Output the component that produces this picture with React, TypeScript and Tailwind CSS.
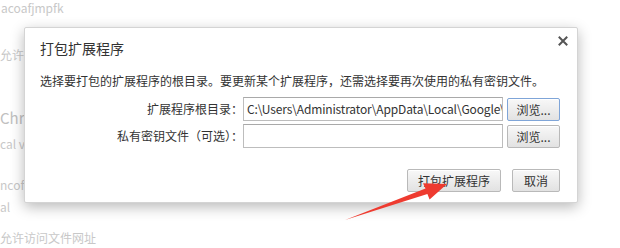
import React from "react";

const font = { fontFamily: '"Noto Sans CJK SC", "Noto Sans", sans-serif' };

function Btn({ children, w, focused }: { children: React.ReactNode; w: string; focused?: boolean }) {
  return (
    <button
      className={
        "h-[23px] rounded-[2px] border text-[12px] leading-[21px] text-[#333] bg-gradient-to-b from-[#f8f8f8] to-[#e2e2e2] shadow-[inset_0_1px_0_#fff] " +
        w +
        (focused ? " border-[#7fa5d8]" : " border-[#b9b9b9]")
      }
    >
      {children}
    </button>
  );
}

export default function App() {
  return (
    <div className="relative w-[620px] h-[248px] overflow-hidden bg-white" style={font}>
      {/* background page */}
      <div className="flex flex-col text-[#c8c8c8] text-[12px] leading-[16px]">
        <div className="mt-[0px] pl-[1px]">acoafjmpfk</div>
        <div className="mt-[31px]">允许</div>
        <div className="mt-[45px] text-[15px] leading-[20px] text-[#c0c0c0]">Chro</div>
        <div className="mt-[8px]">cal v</div>
        <div className="mt-[25px]">ncoff</div>
        <div className="mt-[6px]">al</div>
        <div className="mt-[15px]">允许访问文件网址</div>
      </div>

      {/* dialog */}
      <div className="absolute left-[24px] top-[27px] w-[554px] h-[176px] bg-white border border-[#d4d4d4] rounded-[2px] shadow-[0_4px_14px_rgba(0,0,0,0.28)] flex flex-col">
        <div className="flex items-start justify-between pl-[15px] pr-[9px] pt-[10px]">
          <div className="text-[14px] leading-[20px] text-[#333]">打包扩展程序</div>
          <svg width="10" height="10" viewBox="0 0 10 10" className="mt-[-2px]">
            <path d="M1.5 1.5 L8.5 8.5 M8.5 1.5 L1.5 8.5" stroke="#555" strokeWidth="2" strokeLinecap="square" />
          </svg>
        </div>
        <div className="pl-[15px] mt-[14px] text-[12px] leading-[18px] text-[#333]">
          选择要打包的扩展程序的根目录。要更新某个扩展程序，还需选择要再次使用的私有密钥文件。
        </div>
        <div className="mt-[6px] flex flex-col gap-[2px] pl-[15px] pr-[17px]">
          <div className="flex items-center">
            <div className="w-[203px] text-right text-[12px] text-[#333]">扩展程序根目录：</div>
            <div className="w-[260px] h-[24px] border border-[#bdbdbd] border-t-[#a9a9a9] bg-white overflow-hidden whitespace-nowrap text-[12px] tracking-[-0.15px] leading-[22px] text-[#333] pl-[3px]">
              C:\Users\Administrator\AppData\Local\Google\
            </div>
            <div className="ml-[4px]">
              <Btn w="w-[53px]" focused>
                浏览...
              </Btn>
            </div>
          </div>
          <div className="flex items-center">
            <div className="w-[203px] text-right text-[12px] text-[#333]">私有密钥文件（可选）：</div>
            <div className="w-[260px] h-[24px] border border-[#bdbdbd] border-t-[#a9a9a9] bg-white" />
            <div className="ml-[4px]">
              <Btn w="w-[53px]">浏览...</Btn>
            </div>
          </div>
        </div>
        <div className="mt-[21px] flex justify-end gap-[11px] pr-[17px]">
          <Btn w="w-[94px]">打包扩展程序</Btn>
          <Btn w="w-[48px]">取消</Btn>
        </div>
      </div>

      {/* red arrow annotation */}
      <svg className="absolute left-0 top-0" width="620" height="248" viewBox="0 0 620 248">
        <polygon
          points="345,220 425.5,188.4 423,183.2 447,184 429.6,199.4 427.4,194"
          fill="#ee3b30"
        />
      </svg>
    </div>
  );
}
